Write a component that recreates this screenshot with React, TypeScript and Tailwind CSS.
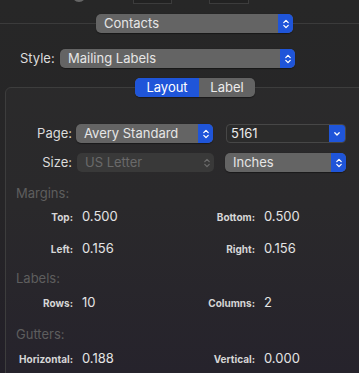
const BLUE = "bg-[#1f55d9]"

function Updown({ dim = false }: { dim?: boolean }) {
  return (
    <svg width="8" height="12" viewBox="0 0 8 12" fill="none" stroke={dim ? "#6b6b6b" : "#ffffff"} strokeWidth="1.3" strokeLinecap="round" strokeLinejoin="round">
      <path d="M1.8 4.6 L4 2.4 L6.2 4.6" />
      <path d="M1.8 7.4 L4 9.6 L6.2 7.4" />
    </svg>
  )
}

function Down() {
  return (
    <svg width="8" height="6" viewBox="0 0 8 6" fill="none" stroke="#ffffff" strokeWidth="1.3" strokeLinecap="round" strokeLinejoin="round">
      <path d="M1.8 1.8 L4 4 L6.2 1.8" />
    </svg>
  )
}

function Popup({ label, width, cls = "" }: { label: string; width: string; cls?: string }) {
  return (
    <div className={`flex h-[19px] shrink-0 overflow-hidden rounded-[5px] bg-[#646464] shadow-[0_0.5px_1px_rgba(0,0,0,0.4)] ${width} ${cls}`}>
      <div className="flex-1 pl-[8px] text-[13px] leading-[19px] text-[#e6e6e6]">{label}</div>
      <div className={`flex w-[15px] items-center justify-center ${BLUE}`}>
        <Updown />
      </div>
    </div>
  )
}

function Field({ label, value, labelW = "w-[67px]" }: { label: string; value: string; labelW?: string }) {
  return (
    <>
      <span className={`${labelW} shrink-0 text-right text-[10px] font-bold text-[#d6d6d6]`}>{label}</span>
      <span className="ml-[9px] shrink-0 text-[13px] text-[#e4e4e4]">{value}</span>
    </>
  )
}

function Pair({ a, b }: { a: [string, string]; b: [string, string] }) {
  return (
    <div className="flex h-[18px] items-center">
      <div className="flex w-[176px] items-center">
        <Field label={a[0]} value={a[1]} />
      </div>
      <Field label={b[0]} value={b[1]} labelW="w-[73px]" />
    </div>
  )
}

function Section({ title, cls }: { title: string; cls: string }) {
  return <div className={`pl-[10px] text-[13px] leading-[16px] text-[#5e5e5e] ${cls}`}>{title}</div>
}

export default function App() {
  return (
    <div className="h-[373px] w-[359px] overflow-hidden bg-[linear-gradient(to_bottom,#272727_0%,#262527_55%,#221f28_100%)] font-['Inter',sans-serif] antialiased">
      {/* clipped controls from the row above */}
      <div className="flex h-[4px] items-start">
        <div className="-mt-[12px] ml-[72px] h-[14px] w-[14px] shrink-0 rounded-full bg-[#666666]" />
        <div className="-mt-[10px] ml-[47px] h-[14px] w-[39px] shrink-0 border border-[#3c3c3c] bg-[#222222]" />
        <div className="-mt-[10px] ml-[37px] h-[14px] w-[40px] shrink-0 border border-[#3c3c3c] bg-[#222222]" />
      </div>

      {/* source popup on separator */}
      <div className="mt-[10px] flex h-[19px] items-center">
        <div className="h-px w-[96px] bg-[#3b3b3b]" />
        <Popup label="Contacts" width="w-[197px]" />
        <div className="h-px flex-1 bg-[#3b3b3b]" />
      </div>

      {/* style */}
      <div className="mt-[16px] flex h-[19px] items-center">
        <span className="ml-[20px] w-[40px] text-[13px] text-[#dcdcdc]">Style:</span>
        <Popup label="Mailing Labels" width="w-[235px]" />
      </div>

      {/* tab box */}
      <div className="ml-[5px] mt-[19px] h-[320px] w-[380px] rounded-[6px] border border-[#3d3d3d] bg-[#ffffff05]">
        <div className="mx-auto -mt-[10px] flex h-[19px] w-[120px] overflow-hidden rounded-[5px] bg-[#636363] text-[13px] leading-[19px] text-white shadow-[0_0.5px_1px_rgba(0,0,0,0.4)]">
          <div className={`w-[64px] text-center ${BLUE}`}>Layout</div>
          <div className="flex-1 text-center text-[#ececec]">Label</div>
        </div>

        <div className="mt-[27px] flex h-[19px] items-center">
          <span className="w-[66px] text-right text-[13px] text-[#dcdcdc]">Page:</span>
          <Popup label="Avery Standard" width="w-[137px]" cls="ml-[4px]" />
          <div className="ml-[13px] flex h-[19px] w-[120px] overflow-hidden rounded-[4px] border border-[#474747] bg-[#2b2b2b]">
            <div className="flex-1 pl-[4px] text-[13px] leading-[17px] text-[#ececec]">5161</div>
            <div className={`flex w-[16px] items-center justify-center ${BLUE}`}>
              <Down />
            </div>
          </div>
        </div>

        <div className="mt-[10px] flex h-[19px] items-center">
          <span className="w-[66px] text-right text-[13px] text-[#dcdcdc]">Size:</span>
          <div className="ml-[5px] flex h-[19px] w-[137px] rounded-[5px] bg-[#393939]">
            <div className="flex-1 pl-[8px] text-[13px] leading-[19px] text-[#6a6a6a]">US Letter</div>
            <div className="flex w-[15px] items-center justify-center">
              <Updown dim />
            </div>
          </div>
          <Popup label="Inches" width="w-[121px]" cls="ml-[11px]" />
        </div>

        <Section title="Margins:" cls="mt-[13px]" />
        <div className="mt-[7px]">
          <Pair a={["Top:", "0.500"]} b={["Bottom:", "0.500"]} />
        </div>
        <div className="mt-[14px]">
          <Pair a={["Left:", "0.156"]} b={["Right:", "0.156"]} />
        </div>

        <Section title="Labels:" cls="mt-[12px]" />
        <div className="mt-[8px]">
          <Pair a={["Rows:", "10"]} b={["Columns:", "2"]} />
        </div>

        <Section title="Gutters:" cls="mt-[14px]" />
        <div className="mt-[8px]">
          <Pair a={["Horizontal:", "0.188"]} b={["Vertical:", "0.000"]} />
        </div>
      </div>
    </div>
  )
}
